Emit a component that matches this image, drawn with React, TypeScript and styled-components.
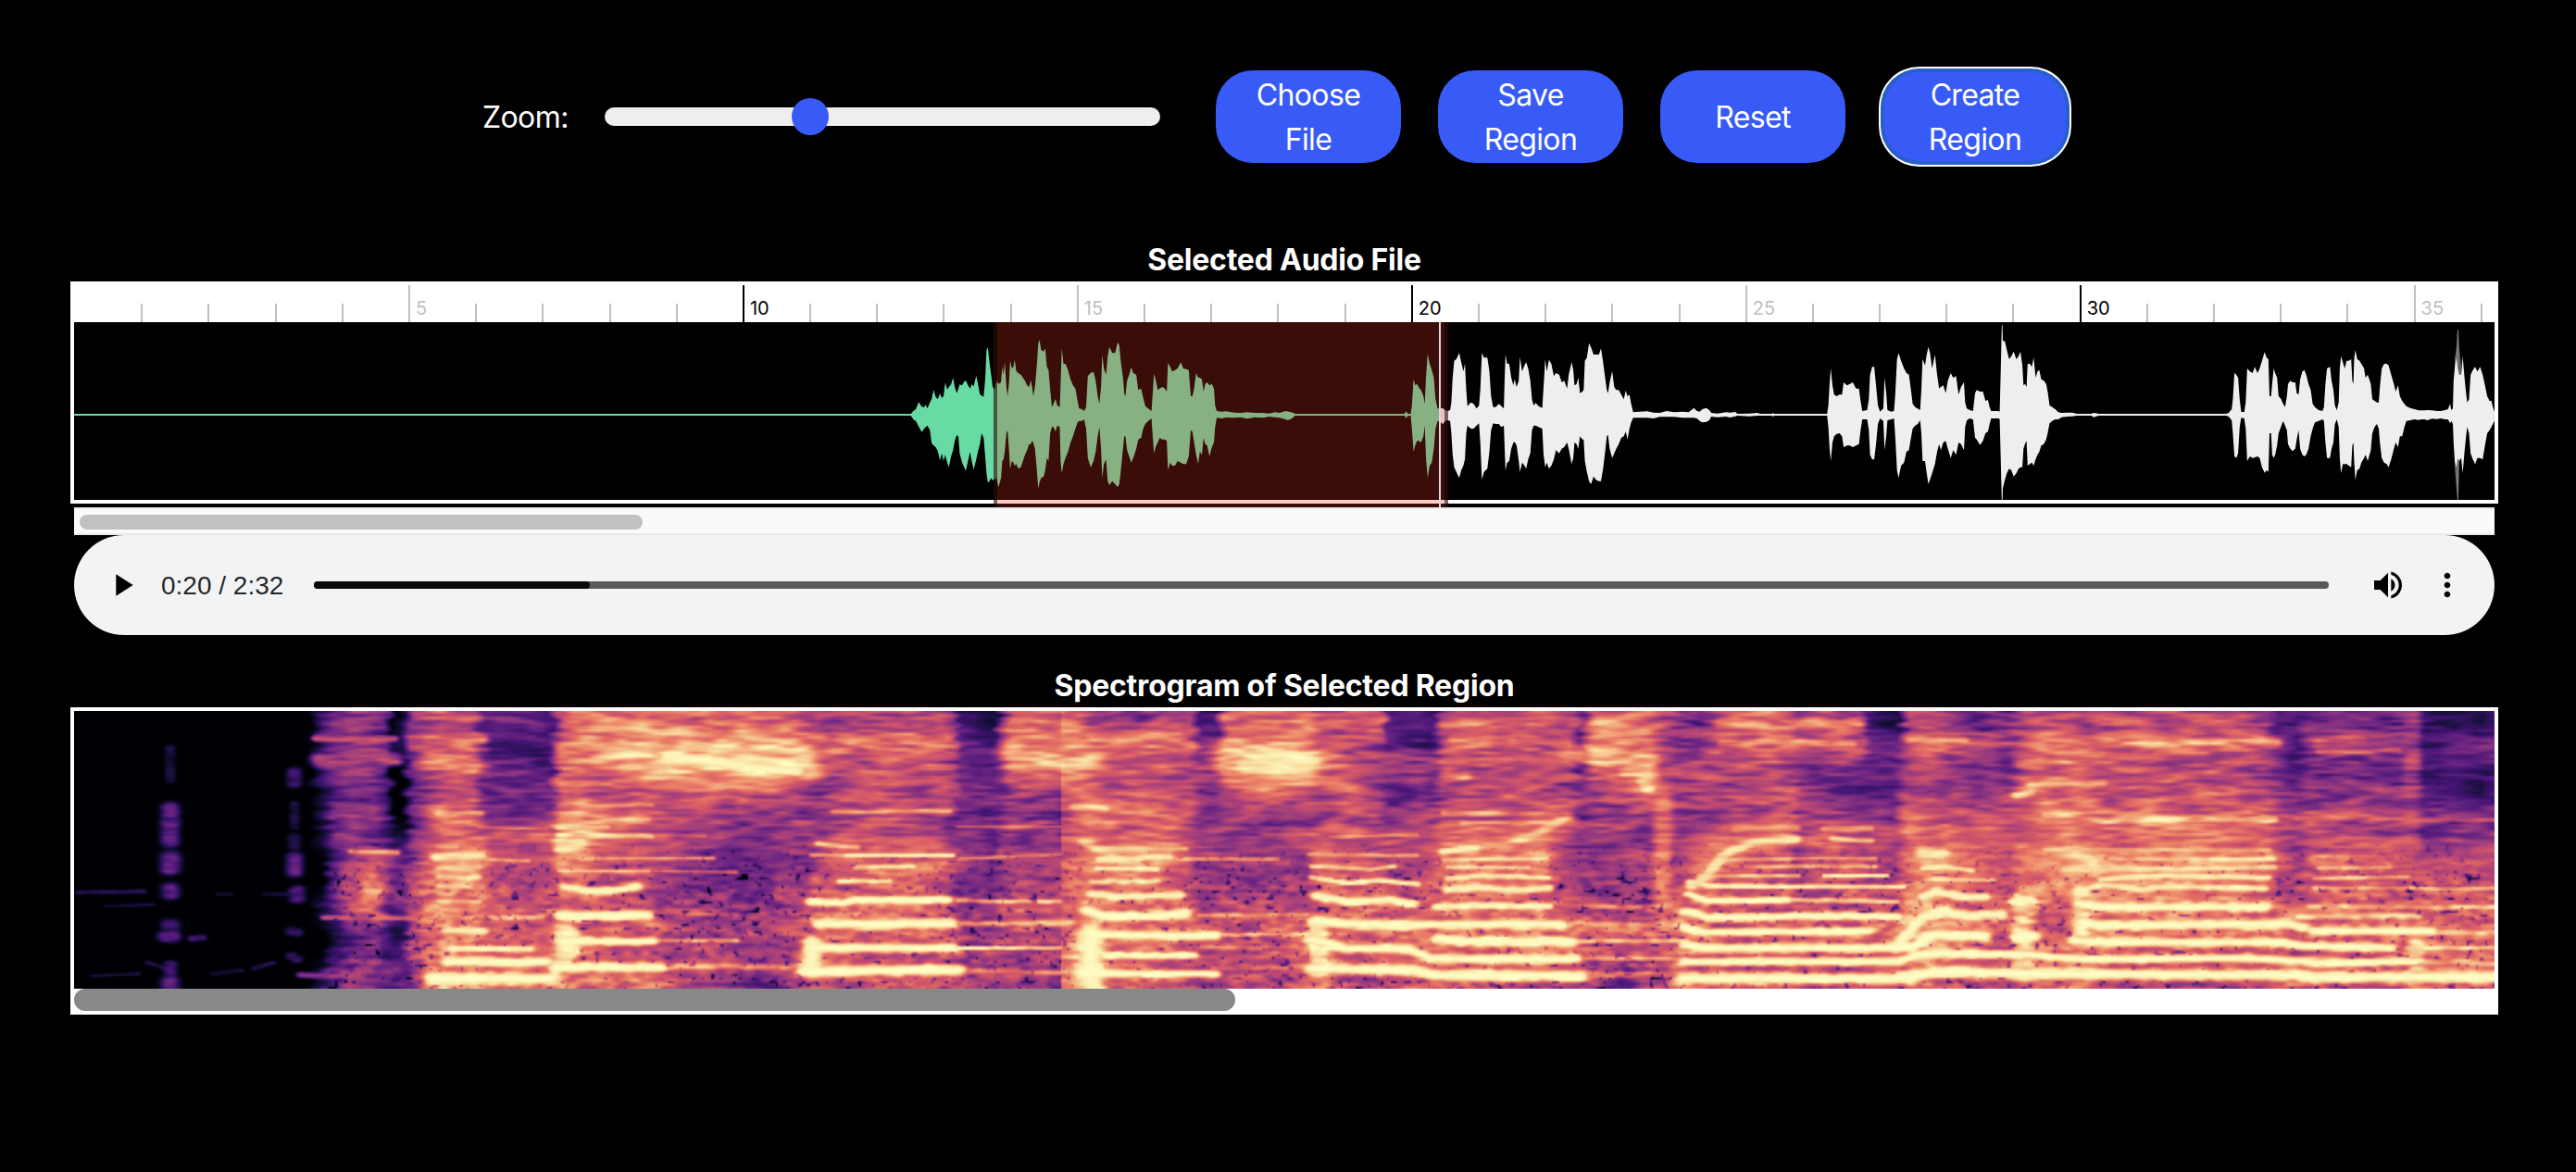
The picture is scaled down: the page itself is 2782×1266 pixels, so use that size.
import React, { useLayoutEffect, useRef } from "react";
import styled, { createGlobalStyle } from "styled-components";

const SANS = `Inter, "Liberation Sans", sans-serif`;
const ACCENT = "#385bf7";

const GlobalStyle = createGlobalStyle`
  * { box-sizing: border-box; }
  body {
    margin: 0;
    background: #000;
    color: #fff;
    font-family: ${SANS};
    font-size: 32px;
    line-height: 48px;
  }
`;

/* ---------- layout ---------- */

const Page = styled.main`
  display: flex;
  flex-direction: column;
  width: 2774px;
  min-height: 1266px;
  padding: 76px 76px 0;
`;

const Toolbar = styled.div`
  display: flex;
  align-items: center;
  height: 100px;
  margin: 0 0 80px 444px;
`;

const ZoomLabel = styled.label`
  width: 133px;
  padding: 2px 0 0 1px;
  letter-spacing: -0.6px;
`;

const ZoomSlider = styled.input`
  appearance: none;
  width: 600px;
  height: 20px;
  margin: 0 60px 0 0;
  border-radius: 10px;
  background: #eee;

  &::-webkit-slider-thumb {
    appearance: none;
    width: 40px;
    height: 40px;
    border: 0;
    border-radius: 50%;
    background: ${ACCENT};
  }
`;

const ButtonGroup = styled.div`
  display: flex;
  gap: 40px;
`;

const ActionButton = styled.button<{ $focused?: boolean }>`
  width: 200px;
  height: 100px;
  padding: 2px 30px 0;
  border: 0;
  border-radius: 40px;
  background: ${ACCENT};
  color: #fff;
  font: 400 32px/48px ${SANS};
  letter-spacing: -0.65px;
  ${(p) =>
    p.$focused &&
    "box-shadow: inset 0 0 0 2px #285fc8, 0 0 0 2px #285fc8, 0 0 0 4px #fff;"}
`;

const SectionTitle = styled.h2`
  height: 48px;
  margin: 0;
  padding-top: 1px;
  font-size: 32px;
  line-height: 48px;
  font-weight: 700;
  letter-spacing: -0.22px;
  text-align: center;
`;

/* ---------- waveform ---------- */

const WavePanel = styled.section`
  height: 240px;
  border: 4px solid #fff;
`;

const Ruler = styled.div`
  display: flex;
  align-items: flex-end;
  height: 40px;
  padding-left: 72.2px;
  background: #fff;
  overflow: hidden;
`;

const Tick = styled.div<{ $kind: "minor" | "mid" | "major" }>`
  flex: none;
  width: 72.2px;
  height: ${(p) => (p.$kind === "minor" ? 20 : 40)}px;
  padding: 13px 0 0 6px;
  border-left: 2px solid ${(p) => (p.$kind === "major" ? "#000" : "#c0c0c0")};
  color: ${(p) => (p.$kind === "major" ? "#000" : "#c0c0c0")};
  font-size: 20px;
  line-height: 24px;
`;

const WaveStage = styled.div`
  position: relative;
  height: 200px;
`;

const WaveSvg = styled.svg`
  display: block;
  width: 2614px;
  height: 200px;
`;

const Region = styled.div`
  position: absolute;
  top: 0;
  bottom: 0;
  left: 993px;
  width: 491px;
  border: solid rgba(0, 0, 0, 0.5);
  border-width: 0 4px;
  background: rgba(232, 52, 34, 0.25);
`;

const Playhead = styled.div`
  position: absolute;
  top: 0;
  bottom: 0;
  left: 1474px;
  width: 2px;
  background: #dfd3e6;
`;

const WaveScroll = styled.div`
  height: 30px;
  margin: 4px 4px 0;
  padding: 6px 6px 0;
  border: solid #e9e9e9;
  border-width: 2px 0;
  background: #fafafa;
`;

const WaveThumb = styled.div`
  width: 608px;
  height: 16px;
  border-radius: 8px;
  background: #c1c1c1;
`;

/* ---------- player ---------- */

const Player = styled.div`
  display: flex;
  align-items: center;
  height: 108px;
  margin: 0 4px 30px;
  padding: 0 31px 0 32px;
  border-radius: 54px;
  background: #f1f3f4;
`;

const PlayerIcon = styled.svg`
  flex: none;
  width: 40px;
  height: 40px;
  fill: #000;
`;

const Time = styled.span`
  width: 165px;
  margin-left: 22px;
  padding-top: 1px;
  color: rgba(0, 0, 0, 0.87);
  font: 400 28px/40px "Liberation Sans", Arial, sans-serif;
  white-space: nowrap;
`;

const Track = styled.div`
  flex: 1;
  height: 8px;
  margin-right: 44px;
  border-radius: 4px;
  background: #595959;
`;

const Played = styled.div`
  width: 298px;
  height: 8px;
  border-radius: 4px;
  background: #090909;
`;

const IconGap = styled.span`
  width: 24px;
`;

/* ---------- spectrogram ---------- */

const SpectroPanel = styled.section`
  height: 332px;
  border: 4px solid #fff;
  background: #fff;
`;

const SpectroCanvas = styled.canvas`
  display: block;
  width: 2614px;
  height: 300px;
`;

const SpectroThumb = styled.div`
  width: 1254px;
  height: 24px;
  border-radius: 12px;
  background: #888;
`;

/* Peak chunks: origin in px, samples per px, and "position,up,down" triplets
   with the amplitudes in thirds of a pixel. */
const PEAKS: { origin: number; scale: number; data: string }[] = [
  {
    origin: 860,
    scale: 2.24,
    data: `98,3,3 104,12,15 110,18,20 117,41,38 124,26,56 130,24,45 134,32,40 138,20,35 144,40,50 148,50,92 153,80,100 158,58,105
163,50,118 168,68,148 173,55,125 177,60,150 181,104,130 186,82,155 190,90,170 195,98,135 200,120,115 204,90,85 209,70,65 213,85,72
216,98,125 222,95,155 227,108,170 231,110,182 236,96,150 241,85,120 245,98,150 250,92,178 256,127,145 261,95,115 265,65,95 269,62,60
274,58,75 278,120,140 281,210,190 284,218,220 288,170,215 292,130,205 296,90,212 300,80,210 305,110,205 310,100,235 316,105,205
319,155,150 322,130,145 325,172,120 329,90,60 332,60,50 335,100,110 338,175,175 342,150,150 346,155,155 349,178,165 353,140,160
358,135,175 364,130,170 369,120,150 374,110,130 379,95,115 384,90,95 388,112,95 391,90,85 394,60,90 398,90,110 402,150,170
406,230,240 409,243,220 413,210,205 419,205,200 423,215,180 427,155,140 431,145,150 435,80,60 439,25,40 443,35,40 448,52,55
452,30,35 458,25,40 460,100,150 463,215,190 467,165,160 472,165,140 478,145,120 484,115,90 490,95,70 496,85,45 501,45,25 505,20,20
512,18,20 517,12,15 522,25,45 526,125,140 533,136,170 540,138,150 545,110,120 550,60,70 554,35,40 558,90,110 561,195,205
565,150,160 570,130,145 574,190,215 578,220,228 585,200,215 592,200,225 598,235,235 602,225,225 606,170,180 611,120,110 614,70,70
617,60,70 621,110,115 626,130,135 631,154,155 636,135,140 643,130,110 648,80,80 655,85,75 660,55,45 665,28,30 672,20,20 680,12,12
683,70,70 686,133,125 690,115,105 695,80,90 700,85,75 706,90,80 712,85,80 717,75,85 720,168,180 725,155,155 730,140,165 737,145,165
743,150,150 751,170,155 757,150,160 764,148,160 770,145,135 775,60,50 779,60,55 783,85,90 788,135,130 793,120,160 797,120,120
802,115,130 806,75,75 810,100,95 815,105,100 820,95,135 826,100,105 831,85,90 834,30,40 838,12,10 850,10,12 860,11,9 880,7,10
895,6,8 912,8,13 930,6,8 950,6,10 965,4,6 978,8,8 990,6,10 1003,11,14 1008,11,17 1015,9,16 1022,7,10 1027,3,3 1292,3,3 1296,11,11
1300,3,4 1307,3,3 1310,30,45 1314,115,120 1318,95,100 1322,100,85 1327,88,85 1332,80,90 1338,60,70 1341,35,35 1344,120,140
1348,198,205 1353,165,165 1358,145,155 1363,120,110 1367,50,45 1372,20,20`,
  },
  {
    origin: 1420,
    scale: 2.24,
    data: `122,20,22 128,22,28 131,20,30 136,15,20 142,12,18 148,15,20 151,40,60 154,120,130 158,175,170 163,180,185 170,200,205
175,170,180 180,140,165 184,165,145 187,80,60 190,28,35 198,40,45 205,35,45 212,20,35 218,30,28 221,80,90 225,200,210 230,185,185
238,185,175 243,140,120 247,60,50 252,25,28 258,25,30 266,35,30 272,28,40 278,20,35 280,120,110 282,195,180 286,165,155 291,165,150
296,120,110 301,95,90 304,115,88 309,90,100 314,110,150 317,187,185 322,140,155 328,160,165 332,170,175 337,150,145 342,110,125
346,50,50 350,30,35 355,38,35 362,28,40 371,22,45 374,90,130 378,180,170 382,140,155 387,178,175 393,165,165 399,125,145
404,135,115 412,130,125 418,105,110 424,110,105 431,85,90 435,130,110 442,170,160 446,145,140 449,95,90 454,100,95 458,120,110
462,70,70 468,75,80 471,80,80 474,175,150 479,185,185 484,232,215 489,218,225 495,195,200 502,195,212 508,195,215 513,215,215
518,170,175 523,120,120 527,80,70 530,70,65 534,105,110 540,142,140 545,90,125 550,80,110 556,80,95 562,65,75 568,50,70 573,78,55
577,60,80 582,65,45 586,35,25 591,8,10 605,10,10 625,11,10 640,7,12 655,6,7 672,12,7 690,8,7 710,10,10 725,8,10 738,22,10
745,12,12 752,10,20 758,18,25 768,22,23 775,15,18 780,6,6 795,4,8 815,8,6 825,7,9 838,9,5 843,3,3 872,4,5 892,6,3 898,3,3 926,3,3
929,5,6 932,3,3 1060,3,3 1063,30,40 1066,100,110 1069,150,150 1073,95,90 1077,65,70 1083,60,62 1090,65,60 1096,65,70 1100,105,105
1108,95,100 1115,100,100 1122,105,105 1130,85,100 1137,85,95 1141,45,50 1145,12,15 1157,15,15 1161,50,50 1164,130,130 1169,155,145
1174,155,145 1178,100,100 1183,30,30 1188,10,12 1196,20,20 1199,120,115 1203,70,70 1206,15,18 1215,10,15 1222,12,12 1225,70,75
1229,180,180 1233,200,205 1239,175,165 1246,150,155 1252,135,120 1258,130,115 1263,80,75 1267,35,45 1273,25,35 1279,20,30
1285,15,18 1288,80,60 1291,180,150 1297,160,150 1301,195,190 1305,220,225 1309,200,210 1314,150,190 1321,195,160 1326,130,120
1331,85,95 1335,90,115 1341,95,90 1347,70,85 1352,110,110 1359,135,140 1365,120,115 1372,125,130 1378,65,90 1384,90,95
1391,105,115 1394,40,40 1398,20,18 1405,15,12 1413,12,15 1418,70,75 1422,80,80 1430,75,98 1437,75,85 1443,45,60 1449,48,55
1453,25,30 1457,12,12 1475,12,12`,
  },
  {
    origin: 2020,
    scale: 2.45,
    data: `146,10,15 149,150,150 151,260,250 152,291,290 154,240,240 160,238,210 165,210,190 171,180,175 177,190,180 183,205,200
190,180,190 196,190,175 201,205,170 206,160,170 209,95,110 213,100,95 217,90,85 220,165,165 226,165,160 231,155,155 236,185,165
241,120,145 246,140,130 251,145,120 256,115,100 263,110,95 269,100,80 273,75,60 278,30,28 285,25,20 293,18,15 301,8,15 310,6,8
325,7,6 338,7,5 350,3,3 388,3,3 395,6,8 405,4,4 410,3,3 745,3,3 752,6,6 760,18,18 763,50,60 767,135,135 772,130,140 777,120,125
781,50,40 785,10,10 793,8,12 797,40,45 801,150,150 808,140,135 815,135,140 821,155,138 828,135,135 834,150,140 840,175,170
847,203,188 852,185,180 857,180,185 860,60,60 864,60,60 867,100,130 871,150,140 875,135,130 880,120,100 884,60,60 890,52,40
896,35,20 901,25,35 906,60,50 909,100,95 915,110,110 921,105,118 928,105,110 932,70,80 937,65,50 941,115,110 947,140,130
952,145,135 957,130,130 963,100,110 969,80,70 974,35,45 980,25,25 990,15,20 1000,12,15 1004,25,20 1008,100,90 1012,150,140
1020,155,140 1024,110,110 1029,80,90 1033,30,30 1038,15,15 1043,40,40 1046,150,140 1049,190,190 1054,170,160 1059,150,160
1064,175,160 1070,175,165 1076,180,170 1079,110,100 1082,100,90 1084,180,150 1087,210,210 1092,180,180 1098,175,175 1103,165,155
1110,150,140 1114,120,130 1120,130,150 1128,100,115 1132,50,60 1138,45,40 1144,40,30 1149,40,45 1152,90,90 1157,150,140
1163,165,155 1170,165,160 1175,160,170 1182,130,145 1189,100,110 1194,75,90 1200,95,105 1205,60,70 1211,45,70 1217,35,40
1222,28,20 1232,22,18 1243,18,15 1255,14,17 1262,14,15 1270,14,15 1278,15,18 1290,14,13 1303,12,14 1313,12,12 1325,15,15
1332,18,15 1338,35,28 1341,15,20 1345,20,30 1347,110,90 1350,150,150 1354,185,170 1358,150,140 1362,130,150 1367,130,140
1371,190,190 1376,120,120 1380,70,70 1383,40,40 1388,50,60 1392,130,125 1398,145,145 1404,155,160 1410,140,140 1417,155,140
1424,130,145 1430,95,100 1436,60,60 1442,45,50 1447,45,40 1451,25,30 1455,10,20`,
  },
];

function buildWavePath(): string {
  const top: string[] = ["0,99"];
  const bottom: string[] = ["0,101"];
  for (const { origin, scale, data } of PEAKS) {
    for (const triplet of data.split(/\s+/)) {
      const [pos, up, down] = triplet.split(",").map(Number);
      const x = (origin + pos / scale).toFixed(1);
      top.push(`${x},${(100 - up / 3).toFixed(1)}`);
      bottom.push(`${x},${(100 + down / 3).toFixed(1)}`);
    }
  }
  return `M${top.join("L")}L${bottom.reverse().join("L")}Z`;
}

const WAVE_PATH = buildWavePath();

function Waveform() {
  return (
    <WaveSvg viewBox="0 0 2614 200">
      <defs>
        <linearGradient id="progress" gradientUnits="userSpaceOnUse" x1="0" x2="2614" y1="0" y2="0">
          <stop offset={1474 / 2614} stopColor="#67dba3" />
          <stop offset={1474 / 2614} stopColor="#eeeeee" />
        </linearGradient>
      </defs>
      <path d={WAVE_PATH} fill="url(#progress)" />
      <g fill="#eee">
        <path d="M2082 3h1v193h-1z" opacity=".6" />
        <path d="M2571 40l2-14 1-18h1l1 20 2 18v82l-2 20-1 44h-1l-2-22-1-14z" opacity=".4" />
        <path d="M2573 30l1-21h1v183h-1l-1-20z" opacity=".2" />
      </g>
    </WaveSvg>
  );
}

/* Spectral energy: [x, one digit per 25px band from high to low frequency]. */
const ENERGY: [number, string][] = [
  [0, "000000000000"], [255, "000000000000"], [268, "222111001001"], [280, "333233232123"], [300, "444344454334"],
  [325, "444343566343"], [338, "333222443223"], [346, "010001333123"], [356, "110001333123"], [366, "443333454444"],
  [385, "555455666667"], [400, "666566877777"], [430, "566566876777"], [440, "344346766666"], [450, "323335555666"],
  [490, "323335545566"], [514, "222345555666"], [526, "556678766787"], [545, "676688666666"], [580, "676566555556"],
  [620, "778665555656"], [640, "779655444545"], [690, "688644334444"], [740, "688543334443"], [775, "678544444544"],
  [795, "567444445565"], [802, "565445556665"], [830, "465556656665"], [880, "465555666655"], [935, "565455656655"],
  [950, "454444545654"], [957, "233334434444"], [995, "122333334444"], [1003, "443334435544"], [1012, "666444445544"],
  [1040, "677444445544"], [1065.5, "677433445543"], [1066.5, "778655555666"], [1085, "677666666688"],
  [1100, "466667767778"], [1130, "465656766665"], [1180, "465566756665"], [1205, "565555556655"], [1215, "234444444554"],
  [1232, "234344444544"], [1243, "667444445554"], [1265, "678644435555"], [1300, "679644445654"], [1330, "678645445665"],
  [1345, "556546665666"], [1380, "655655655654"], [1410, "545455555654"], [1418, "235345545665"], [1468, "225345555665"],
  [1480, "556556666665"], [1500, "665556766665"], [1550, "565556666665"], [1590, "655567656665"], [1615, "565465445665"],
  [1628, "333444445654"], [1642, "666444444554"], [1675, "777544444652"], [1700, "678744444654"], [1715, "555556655654"],
  [1730, "445444456666"], [1755, "345545676665"], [1780, "564556755555"], [1830, "665557555555"], [1855, "564556555555"],
  [1862, "454445455555"], [1900, "553346555654"], [1930, "453245555654"], [1938, "233245545655"], [1968, "133235445655"],
  [1980, "554466666677"], [2005, "565566777876"], [2050, "453456665654"], [2090, "343456555554"], [2105, "555656667776"],
  [2130, "576676775566"], [2160, "576676876666"], [2200, "565566776655"], [2300, "565566776654"], [2365, "464566766654"],
  [2378, "243455656655"], [2400, "222344446655"], [2415, "343455556655"], [2450, "353455656655"], [2500, "343444656655"],
  [2525, "443445555666"], [2535, "222343555666"], [2600, "132134555666"], [2614, "232234555666"],
];

/* Harmonics and bursts: [points "x,y ...", half thickness, level]. */
const STROKES: [string, number, number][] = [
  ["104,40 104,75", 3, 0.1], ["104,104 104,118", 5.5, 0.25], ["104,120 104,142", 5.5, 0.24], ["104,157 104,171", 6, 0.27],
  ["104,191 104,198", 5.5, 0.23], ["104,230 104,238", 5.5, 0.18], ["99,244 106,245", 5, 0.24], ["128,246 138,245", 3, 0.2],
  ["104,274 104,282", 4, 0.2], ["104,292 104,300", 5.5, 0.27], ["5,196 75,195", 2, 0.15], ["35,211 85,209", 1.5, 0.1],
  ["20,286 70,284", 1.5, 0.12], ["150,284 180,280", 2, 0.09], ["195,278 215,272", 2, 0.12], ["238,65 238,78", 4.5, 0.16],
  ["238,100 238,125", 3, 0.09], ["238,137 238,146", 4, 0.13], ["238,158 238,174", 5, 0.24], ["241,194 241,202", 5, 0.22],
  ["235,238 240,239", 4, 0.18], ["236,265 240,268", 4, 0.15], ["80,272 105,280", 2, 0.14], ["155,198 170,198", 1.5, 0.1],
  ["205,198 235,198", 1.5, 0.1],
  ["262,30 345,30", 3, 0.46], ["266,53 345,52", 6, 0.46], ["300,152 348,153", 2.4, 0.72], ["323,190 323,204", 6, 0.7],
  ["245,285 290,288", 3, 0.3], ["270,223 395,224", 2.5, 0.5], ["385,31 440,31", 4, 0.62], ["385,52 430,56", 6, 0.66],
  ["388,289 514,289", 5.5, 1], ["404,271 508,271", 4.2, 1], ["411,257 492,257", 3.2, 0.97], ["402,238 442,238", 3.6, 0.94],
  ["392,223 505,223", 2.4, 0.74], ["395,205 437,206", 2, 0.8], ["395,189 440,190", 2.4, 0.82], ["395,179 436,179", 2.4, 0.86],
  ["395,170 436,169", 2.4, 0.84], ["392,158 438,157", 4, 0.88], ["438,160 490,162", 1.8, 0.74], ["438,126 510,127", 1.5, 0.68],
  ["395,111 438,111", 3, 0.74], ["522,277 633,277", 5, 1], ["528,249 624,249", 4.2, 1], ["533,240 533,260", 7, 0.95],
  ["527,221 618,221", 4.8, 1], ["530,190 555,195 580,194 607,190", 3.8, 0.98], ["525,173 620,173", 1.8, 0.8],
  ["525,159 690,159", 1.7, 0.72], ["528,149 545,144", 5, 0.92], ["525,134 623,135", 2.6, 0.84], ["620,134 680,135", 2, 0.66],
  ["525,126 575,125", 2.2, 0.8], ["525,117 620,117", 1.8, 0.74], ["525,103 623,102", 2, 0.76], ["530,41 600,44", 6, 0.72],
  ["600,48 650,48 690,53 732,60 788,64", 11, 0.84], ["640,30 720,36 780,50", 12, 0.78], ["642,49 665,51 705,57 740,62 780,65", 4, 0.97],
  ["620,248 715,248", 2, 0.76], ["620,276 790,276", 3, 0.74], ["620,173 715,174", 1.5, 0.6], ["620,219 715,220", 2, 0.6],
  ["792,281 955,280", 5.6, 1], ["798,256 948,256", 4.8, 1], ["797,250 795,280", 6, 0.97], ["806,230 946,230", 4.6, 1],
  ["797,206 830,208 845,204 942,204", 3.8, 1], ["834,156 948,156", 2, 0.95], ["797,156 840,156", 1.8, 0.78],
  ["845,169 905,168", 2.3, 0.86], ["828,184 880,184", 2.4, 0.86], ["804,143 845,147", 2.4, 0.86], ["820,109 945,108", 2, 0.68],
  ["830,31 940,29", 5, 0.66], ["955,256 1064,256", 1.8, 0.84], ["955,205 1064,206", 2, 0.74], ["955,230 1090,229", 2.4, 0.72],
  ["955,280 1064,283", 2.4, 0.62], ["955,125 1064,125", 1.5, 0.6], ["955,160 1064,155", 1.5, 0.62],
  ["1020,46 1085,52", 12, 0.76], ["1090,284 1232,284", 4, 1], ["1115,264 1209,264", 3.4, 1],
  ["1098,238 1098,262 1096,280 1102,297", 7, 0.98],
  ["1104,242 1232,243", 4.4, 1], ["1095,216 1112,221 1160,222 1198,219", 4.4, 1], ["1100,197 1125,201 1195,199", 3.6, 0.97],
  ["1100,184 1170,184", 2.6, 0.82], ["1106,170 1168,171", 2.2, 0.93], ["1108,160 1182,158", 3, 0.92], ["1092,142 1120,156", 4, 0.82],
  ["1110,148 1200,149", 2, 0.78], ["1080,103 1112,106", 3, 0.76], ["1182,160 1300,160", 1.5, 0.72], ["1232,242 1330,241", 2, 0.76],
  ["1215,221 1330,220", 2, 0.72], ["1205,255 1330,256", 1.8, 0.64], ["1232,278 1330,276", 2.4, 0.62], ["1100,30 1190,27", 5, 0.68],
  ["1256,50 1290,54 1328,54", 15, 0.84], ["1266,60 1328,60", 6, 0.94], ["1302,48 1325,52", 9, 0.93],
  ["1337,278 1445,280 1470,286 1625,286", 5.6, 1], ["1336,247 1356,251 1372,257 1440,257 1465,267 1490,268 1622,268", 4.6, 1],
  ["1341,227 1375,230 1425,231 1604,230", 4.6, 1], ["1343,200 1375,206 1422,204 1445,208", 4.2, 0.98],
  ["1337,180 1375,186 1410,183 1450,187", 2.5, 0.92], ["1337,168 1400,171 1425,168", 2, 0.86], ["1335,155 1450,156", 1.8, 0.76],
  ["1358,136 1450,134", 1.6, 0.68], ["1344,230 1344,280", 6, 0.9], ["1475,246 1498,249 1616,249", 5, 1],
  ["1472,212 1500,210 1592,211", 3.4, 0.95], ["1484,194 1515,191 1560,193 1592,191", 3.6, 0.96],
  ["1484,181 1520,178 1590,180", 2.6, 0.92], ["1484,169 1570,169", 1.8, 0.86], ["1480,161 1590,159", 2.2, 0.84],
  ["1500,147 1550,144 1582,132 1612,114", 4, 0.78], ["1480,152 1512,148", 3.4, 0.94], ["1582,140 1582,172", 6, 0.7],
  ["1480,110 1610,112", 2.5, 0.74], ["1500,121 1600,120", 2, 0.72], ["1484,70 1500,70", 5, 0.76], ["1490,31 1550,31", 4, 0.7],
  ["1480,14 1570,13", 4, 0.66], ["1614,49 1622,49", 6, 0.7], ["1616,249 1740,248", 2.2, 0.8], ["1620,267 1740,268", 2.2, 0.74],
  ["1604,230 1740,231", 2.6, 0.72], ["1592,210 1690,212", 2.4, 0.66], ["1625,286 1735,284", 3, 0.64],
  ["1655,15 1690,20", 10, 0.72], ["1650,48 1690,52", 12, 0.82], ["1676,68 1690,70 1700,84", 4, 0.84], ["1716,90 1716,220", 5, 0.62],
  ["1738,289 1965,289 1985,287 2010,282 2110,284 2300,285 2400,286 2420,288 2614,287", 5.6, 1],
  ["1740,271 1970,271 1990,264 2010,262 2110,263 2140,266 2165,268 2200,268 2340,267 2400,270 2425,272 2528,271", 4.2, 1],
  ["1742,253 1762,256 1985,256 1997,247 2010,242 2062,244", 4.4, 1], ["1742,235 1760,239 1938,238", 4, 1],
  ["1742,217 1765,223 1830,223 1860,221 1968,222", 4, 1], ["1744,198 1765,205 1850,204", 3.4, 1], ["1850,204 1968,206", 2.4, 0.86],
  ["1745,184 1765,189 1975,190", 2.4, 0.94], ["1755,178 1862,178", 1.8, 0.84], ["1890,178 1958,178", 1.8, 0.9],
  ["1748,189 1765,175 1780,158 1795,149 1815,142 1858,138", 4.2, 0.9], ["1790,160 1945,159", 1.8, 0.76],
  ["1790,168 1945,168", 1.8, 0.74], ["1795,128 1860,127", 3, 0.76], ["1890,127 1940,127", 2.4, 0.76], ["1900,138 1940,140", 2.6, 0.84],
  ["1780,14 1850,14 1925,14", 5, 0.68], ["1780,35 1830,33 1920,36", 3, 0.74],
  ["1968,254 1980,240 1998,222 2020,217 2045,221 2080,220", 4.6, 0.98],
  ["1997,200 2010,195 2040,201 2062,201", 4, 0.97], ["2000,182 2072,183", 2, 0.84], ["1998,170 2020,168 2048,172", 2.4, 0.92],
  ["1997,153 2016,154", 5, 0.92], ["1985,33 2040,32", 3.6, 0.72], ["1988,190 1975,250", 5, 0.74], ["2104,200 2104,275", 6, 0.8],
  ["2094,206 2114,205", 3, 0.96],
  ["2100,243 2115,244", 5, 1], ["2162,248 2184,250 2380,250 2410,254 2500,256", 4.4, 1], ["2168,228 2190,232 2390,230 2405,233", 4.6, 1],
  ["2420,238 2545,238", 4, 1], ["2165,208 2182,212 2366,212", 4.4, 1], ["2165,194 2190,188 2230,192 2270,190 2365,192", 2.8, 0.94],
  ["2190,182 2250,178 2368,180", 2.6, 0.94], ["2150,172 2375,169", 2.4, 0.9], ["2160,155 2185,168", 7, 0.86], ["2200,160 2320,160", 2, 0.8],
  ["2310,160 2374,160", 2.4, 0.93], ["2130,150 2370,150", 2.2, 0.78], ["2130,113 2165,113 2195,120 2250,117 2376,117", 2.8, 0.82],
  ["2130,38 2200,32 2280,34 2378,35", 4, 0.72], ["2105,57 2180,54", 5, 0.7], ["2115,80 2190,78", 3.5, 0.74], ["2098,91 2112,88", 3.5, 0.78],
  ["2168,195 2168,250", 5, 0.86], ["2425,35 2470,32", 4, 0.58], ["2425,44 2510,43", 2.5, 0.6], ["2420,160 2450,158", 5, 0.74],
  ["2420,181 2520,179", 2, 0.8], ["2425,170 2500,169", 1.8, 0.74], ["2420,191 2614,192", 1.8, 0.72], ["2415,211 2614,212", 2.4, 0.76],
  ["2405,222 2530,222", 3, 0.82], ["2520,256 2614,256", 2, 0.8], ["2530,238 2614,240", 2.4, 0.78], ["2520,271 2614,272", 3, 0.76],
  ["2525,10 2525,170", 5, 0.46], ["2400,116 2614,118", 2, 0.54], ["2530,252 2530,288", 5, 0.86],
];

const MAGMA: [number, number, number][] = [
  [0, 0, 4], [24, 15, 60], [66, 20, 116], [110, 38, 130], [150, 58, 126], [190, 74, 114],
  [221, 98, 100], [238, 138, 106], [244, 184, 134], [250, 226, 166], [253, 253, 196],
];

function hash(x: number, y: number): number {
  let h = (Math.imul(x, 374761393) + Math.imul(y, 668265263)) | 0;
  h = Math.imul(h ^ (h >>> 13), 1274126177);
  return ((h ^ (h >>> 16)) >>> 0) / 4294967295;
}

function rowNoise(x: number, row: number): number {
  const shifted = x + hash(row, 7919) * 16;
  const ix = Math.floor(shifted);
  const f = shifted - ix;
  const s = f * f * (3 - 2 * f);
  return hash(ix, row) * (1 - s) + hash(ix + 1, row) * s;
}

/* Value noise whose rows are shifted against each other, so cells never line up in columns. */
function noise(x: number, y: number): number {
  const iy = Math.floor(y);
  const f = y - iy;
  const s = f * f * (3 - 2 * f);
  return (rowNoise(x, iy) * (1 - s) + rowNoise(x, iy + 1) * s) * 2 - 1;
}

function renderSpectrogram(canvas: HTMLCanvasElement) {
  const W = 1307;
  const H = 150;
  const ctx = canvas.getContext("2d");
  if (!ctx) return;
  const level = new Float32Array(W * H);

  for (let py = 0; py < H; py++) {
    const y = py * 2 + 1;
    const band = Math.min(11, Math.max(0, y / 25 - 0.5));
    const r = Math.min(10, Math.floor(band));
    const fr = band - r;
    const at = (d: string) => Number(d[r]) * (1 - fr) + Number(d[r + 1]) * fr;
    let col = 0;
    for (let px = 0; px < W; px++) {
      const x = px * 2 + 1;
      const nearSeam = Math.abs(x - 1066) < 16;
      const sx = nearSeam ? x : x + noise(x / 50 + 20, y / 5) * 7;
      while (col < ENERGY.length - 2 && ENERGY[col + 1][0] < sx) col++;
      while (col > 0 && ENERGY[col][0] > sx) col--;
      const [xa, da] = ENERGY[col];
      const [xb, db] = ENERGY[col + 1];
      const f = Math.min(1, Math.max(0, (sx - xa) / (xb - xa)));
      level[py * W + px] = (at(da) * (1 - f) + at(db) * f) / 10;
    }
  }

  for (const [points, half, strength] of STROKES) {
    const pts = points.split(" ").map((p) => p.split(",").map(Number));
    const mask = new Map<number, number>();
    for (let i = 0; i < pts.length - 1; i++) {
      const [x0, y0] = pts[i];
      const [x1, y1] = pts[i + 1];
      const reach = half * 2 + 4;
      const len2 = (x1 - x0) ** 2 + (y1 - y0) ** 2 || 1;
      const top = Math.max(0, Math.floor((Math.min(y0, y1) - reach) / 2));
      const bottom = Math.min(H, (Math.max(y0, y1) + reach) / 2);
      const left = Math.max(0, Math.floor((Math.min(x0, x1) - reach * 2) / 2));
      const right = Math.min(W, (Math.max(x0, x1) + reach * 2) / 2);
      for (let py = top; py < bottom; py++) {
        for (let px = left; px < right; px++) {
          const x = px * 2 + 1;
          const y = py * 2 + 1;
          const t = Math.min(1, Math.max(0, ((x - x0) * (x1 - x0) + (y - y0) * (y1 - y0)) / len2));
          const dx = (x - x0 - t * (x1 - x0)) / 1.7;
          const dy = y - y0 - t * (y1 - y0);
          const d = (dx * dx + dy * dy) / (half * half);
          const w = Math.exp(-(d ** 1.5) * 0.7);
          const key = py * W + px;
          if (w > (mask.get(key) || 0)) mask.set(key, w);
        }
      }
    }
    mask.forEach((w, key) => {
      if (strength > level[key]) level[key] += (strength - level[key]) * w;
    });
  }

  const image = ctx.createImageData(W, H);
  for (let py = 0; py < H; py++) {
    for (let px = 0; px < W; px++) {
      const x = px * 2;
      const y = py * 2;
      const base = level[py * W + px];
      const low = Math.min(1, Math.max(0, (y - 130) / 60));
      const streaks =
        noise(x / 22, y / 3.4) * 0.14 + noise(x / 48 + 30, y / 6 + 40) * 0.08 + noise(x / 12 + 50, y / 2.6 + 400) * 0.05;
      const grain = noise(x / 10 + 300, y / 4.2 + 90) * 0.12 + noise(x / 34 + 70, y / 5 + 200) * 0.09;
      const gate = base > 0.95 ? 0.12 : base > 0.88 ? 0.45 : Math.min(1, base * 2.5);
      let v = base + (streaks * (1 - low) + grain * low) * gate;
      if (base > 0.35 && base < 0.88) v += 0.03 * low;
      const speck = noise(x / 5 + 900, y / 3.6 + 611);
      if (low > 0.2 && base < 0.75 && base > 0.3 && speck > 0.55) v -= (speck - 0.55) * 0.9 * low;
      v = Math.min(1, Math.max(0, v)) * 10;
      const i = Math.min(9, Math.floor(v));
      const f = v - i;
      const o = (py * W + px) * 4;
      for (let c = 0; c < 3; c++) image.data[o + c] = MAGMA[i][c] * (1 - f) + MAGMA[i + 1][c] * f;
      image.data[o + 3] = 255;
    }
  }
  ctx.putImageData(image, 0, 0);
}

function Spectrogram() {
  const ref = useRef<HTMLCanvasElement>(null);
  useLayoutEffect(() => {
    if (ref.current) renderSpectrogram(ref.current);
  }, []);
  return <SpectroCanvas ref={ref} width={1307} height={150} />;
}

const SECONDS = Array.from({ length: 36 }, (_, i) => i + 1);

const tickKind = (s: number) => (s % 10 === 0 ? "major" : s % 5 === 0 ? "mid" : "minor");

export default function App() {
  return (
    <>
      <GlobalStyle />
      <Page>
        <Toolbar>
          <ZoomLabel htmlFor="zoom">Zoom:</ZoomLabel>
          <ZoomSlider id="zoom" type="range" min="0" max="100" step="any" defaultValue="36.07" />
          <ButtonGroup>
            <ActionButton>Choose File</ActionButton>
            <ActionButton>Save Region</ActionButton>
            <ActionButton>Reset</ActionButton>
            <ActionButton $focused>Create Region</ActionButton>
          </ButtonGroup>
        </Toolbar>

        <SectionTitle>Selected Audio File</SectionTitle>
        <WavePanel>
          <Ruler>
            {SECONDS.map((s) => (
              <Tick key={s} $kind={tickKind(s)}>
                {s % 5 === 0 ? s : null}
              </Tick>
            ))}
          </Ruler>
          <WaveStage>
            <Waveform />
            <Region />
            <Playhead />
          </WaveStage>
        </WavePanel>
        <WaveScroll>
          <WaveThumb />
        </WaveScroll>

        <Player>
          <PlayerIcon viewBox="0 0 24 24">
            <path d="M8 5v14l11-7z" />
          </PlayerIcon>
          <Time>0:20 / 2:32</Time>
          <Track>
            <Played />
          </Track>
          <PlayerIcon viewBox="0 0 24 24">
            <path d="M3 9v6h4l5 5V4L7 9H3zm13.5 3c0-1.77-1.02-3.29-2.5-4.03v8.05c1.48-.73 2.5-2.25 2.5-4.02zM14 3.23v2.06c2.89.86 5 3.54 5 6.71s-2.11 5.85-5 6.71v2.06c4.01-.91 7-4.49 7-8.77s-2.99-7.86-7-8.77z" />
          </PlayerIcon>
          <IconGap />
          <PlayerIcon viewBox="0 0 24 24">
            <path d="M12 8c1.1 0 2-.9 2-2s-.9-2-2-2-2 .9-2 2 .9 2 2 2zm0 2c-1.1 0-2 .9-2 2s.9 2 2 2 2-.9 2-2-.9-2-2-2zm0 6c-1.1 0-2 .9-2 2s.9 2 2 2 2-.9 2-2-.9-2-2-2z" />
          </PlayerIcon>
        </Player>

        <SectionTitle>Spectrogram of Selected Region</SectionTitle>
        <SpectroPanel>
          <Spectrogram />
          <SpectroThumb />
        </SpectroPanel>
      </Page>
    </>
  );
}
